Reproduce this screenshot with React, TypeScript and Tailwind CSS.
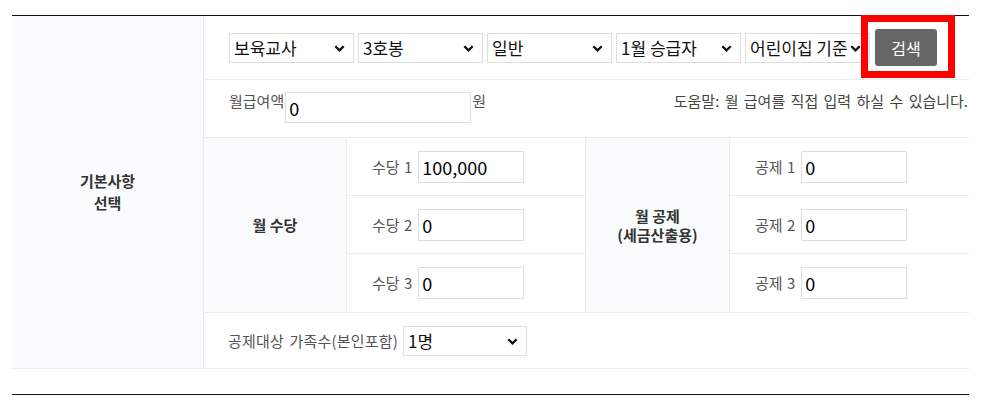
import React from "react";

const Chevron = () => (
  <svg width="11" height="7" viewBox="0 0 11 7">
    <path d="M1.3 1.3 L5.5 5.4 L9.7 1.3" fill="none" stroke="#111" strokeWidth="2.3" />
  </svg>
);

function Sel({ value, options, w = "w-[125px]" }: { value: string; options: string[]; w?: string }) {
  return (
    <div className={`relative ${w} h-[30px] shrink-0`}>
      <select
        defaultValue={value}
        className="appearance-none w-full h-full border border-[#dedede] bg-white pl-[4px] pr-[12px] text-[17px] text-[#111] leading-[28px] outline-none"
      >
        {options.map((o) => (
          <option key={o}>{o}</option>
        ))}
      </select>
      <span className="pointer-events-none absolute right-[9px] top-[12px] flex">
        <Chevron />
      </span>
    </div>
  );
}

function Inp({ value, w }: { value: string; w: string }) {
  return (
    <input
      defaultValue={value}
      className={`${w} h-[32px] border border-[#dedede] bg-white pl-[3px] text-[18px] text-black outline-none`}
    />
  );
}

function SubRow({ label, value, last }: { label: string; value: string; last?: boolean }) {
  return (
    <div className={`h-[58px] flex items-center pl-[25px] gap-[6px] ${last ? "" : "border-b border-[#ececec]"}`}>
      <span className="text-[15px] leading-[20px] text-[#555] [word-spacing:1px]">{label}</span>
      <Inp value={value} w="w-[106px]" />
    </div>
  );
}

export default function App() {
  return (
    <div className="relative w-[981px] h-[411px] bg-white font-['Noto_Sans_CJK_KR','Noto_Sans',sans-serif]">
      <div className="pt-[15px] pl-[12px] w-[969px]">
        <div className="border-t border-[#111] flex">
          <div className="w-[192px] shrink-0 bg-[#fafbfc] border-r border-b border-[#ececec] flex items-center justify-center text-center font-bold text-[15px] leading-[22px] text-[#333]">
            기본사항
            <br />
            선택
          </div>
          <div className="flex-1 flex flex-col">
            <div className="h-[64px] border-b border-[#ececec] flex items-center pl-[25px] gap-[4px]">
              <Sel value="보육교사" options={["보육교사"]} />
              <Sel value="3호봉" options={["3호봉"]} />
              <Sel value="일반" options={["일반"]} />
              <Sel value="1월 승급자" options={["1월 승급자"]} />
              <Sel value="어린이집 기준" options={["어린이집 기준"]} />
              <button className="ml-[1px] w-[62px] h-[37px] bg-[#666] rounded-[3px] text-white text-[16px] leading-[20px]">
                검색
              </button>
            </div>
            <div className="h-[58px] border-b border-[#ececec] flex items-start pt-[12px] pl-[25px] pr-[1px]">
              <span className="text-[15px] leading-[18px] text-[#555]">월급여액</span>
              <input
                defaultValue="0"
                className="ml-[1px] w-[186px] h-[31px] border border-[#dedede] bg-white pl-[3px] text-[18px] text-black outline-none"
              />
              <span className="ml-[1px] text-[15px] leading-[18px] text-[#555]">원</span>
              <span className="ml-auto text-[15px] leading-[18px] text-[#444] [word-spacing:2px]">
                도움말: 월 급여를 직접 입력 하실 수 있습니다.
              </span>
            </div>
            <div className="flex border-b border-[#ececec]">
              <div className="w-[143px] shrink-0 bg-[#fafbfc] border-r border-[#ececec] flex items-center justify-center font-bold text-[15px] leading-[20px] text-[#333]">
                월 수당
              </div>
              <div className="w-[239px] shrink-0 border-r border-[#ececec]">
                <SubRow label="수당 1" value="100,000" />
                <SubRow label="수당 2" value="0" />
                <SubRow label="수당 3" value="0" last />
              </div>
              <div className="w-[144px] shrink-0 bg-[#fafbfc] border-r border-[#ececec] flex items-center justify-center text-center font-bold text-[15px] leading-[19px] text-[#333]">
                월 공제
                <br />
                (세금산출용)
              </div>
              <div className="flex-1">
                <SubRow label="공제 1" value="0" />
                <SubRow label="공제 2" value="0" />
                <SubRow label="공제 3" value="0" last />
              </div>
            </div>
            <div className="h-[56px] border-b border-[#ececec] flex items-center pl-[24px] gap-[5px]">
              <span className="text-[15px] leading-[20px] text-[#555] [word-spacing:2px] tracking-[0.2px]">
                공제대상 가족수(본인포함)
              </span>
              <Sel value="1명" options={["1명"]} w="w-[124px]" />
            </div>
          </div>
        </div>
        <div className="mt-[25px] border-t border-[#111]" />
      </div>
      <div className="absolute left-[861px] top-[15px] w-[94px] h-[63px] border-[7px] border-[#ff0000]" />
    </div>
  );
}
